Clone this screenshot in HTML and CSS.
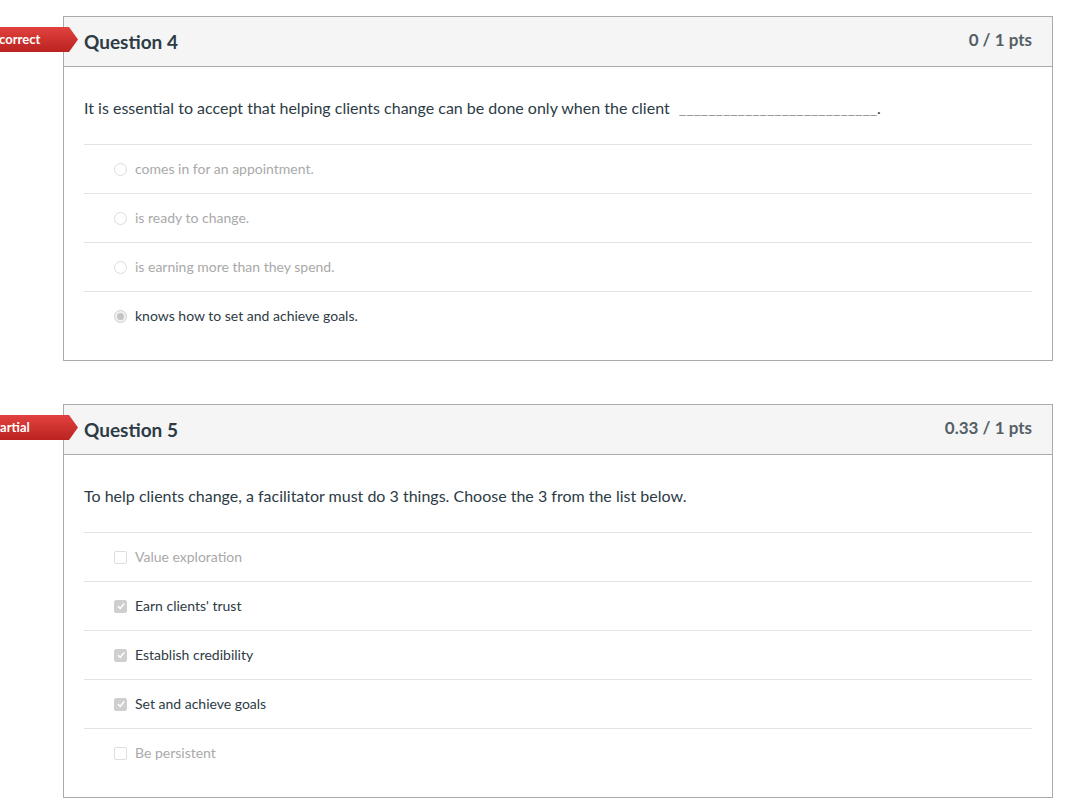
FILE: index.html
```html
<!doctype html>
<html lang="en">
<head>
    <meta charset="UTF-8">
    <title>Quiz results</title>
    <link rel="stylesheet" href="styles.css">
</head>
<body>

<div class="quiz">
    <div class="question">
        <div class="badge">Incorrect</div>
        <div class="header">
            <div class="title">Question 4</div>
            <div class="points">0 / 1 pts</div>
        </div>
        <div class="content">
            <div class="text">It is essential to accept that helping clients change can be done only when the client <span class="blank">___________________________</span>.</div>
            <div class="answers">
                <div class="answer"><span class="radio"></span>comes in for an appointment.</div>
                <div class="answer"><span class="radio"></span>is ready to change.</div>
                <div class="answer"><span class="radio"></span>is earning more than they spend.</div>
                <div class="answer selected"><span class="radio checked"></span>knows how to set and achieve goals.</div>
            </div>
        </div>
    </div>

    <div class="question">
        <div class="badge">Partial</div>
        <div class="header">
            <div class="title">Question 5</div>
            <div class="points">0.33 / 1 pts</div>
        </div>
        <div class="content">
            <div class="text">To help clients change, a facilitator must do 3 things. Choose the 3 from the list below.</div>
            <div class="answers">
                <div class="answer"><span class="check"></span>Value exploration</div>
                <div class="answer selected"><span class="check checked"><svg width="10" height="10" viewBox="0 0 10 10"><path d="M2 5.2 L4.2 7.4 L8.2 2.6" fill="none" stroke="#fff" stroke-width="1.6"/></svg></span>Earn clients' trust</div>
                <div class="answer selected"><span class="check checked"><svg width="10" height="10" viewBox="0 0 10 10"><path d="M2 5.2 L4.2 7.4 L8.2 2.6" fill="none" stroke="#fff" stroke-width="1.6"/></svg></span>Establish credibility</div>
                <div class="answer selected"><span class="check checked"><svg width="10" height="10" viewBox="0 0 10 10"><path d="M2 5.2 L4.2 7.4 L8.2 2.6" fill="none" stroke="#fff" stroke-width="1.6"/></svg></span>Set and achieve goals</div>
                <div class="answer"><span class="check"></span>Be persistent</div>
            </div>
        </div>
    </div>
</div>

</body>
</html>
```

FILE: styles.css
```css
body {
    margin: 0;
    padding: 0;
    background: #fff;
    font-family: Lato, "Open Sans", sans-serif;
    color: #2d3b45;
    overflow: hidden;
}

.quiz {
    padding: 16px 0 0 63px;
}

.question {
    position: relative;
    width: 988px;
    border: 1px solid #aaaaaa;
    margin-bottom: 43px;
}

/* ribbon sticks out to the left of the box */
.badge {
    position: absolute;
    left: -76px;
    top: 10px;
    width: 90px;
    height: 25px;
    line-height: 24px;
    padding-right: 44px;
    box-sizing: border-box;
    text-align: center;
    white-space: nowrap;
    color: #fff;
    font-size: 13px;
    font-weight: bold;
    background: linear-gradient(#e2423f, #b92320);
    clip-path: polygon(0 0, calc(100% - 9px) 0, 100% 50%, calc(100% - 9px) 100%, 0 100%);
}

.header {
    display: flex;
    justify-content: space-between;
    align-items: center;
    height: 49px;
    padding: 0 20px;
    background: #f5f5f5;
    border-bottom: 1px solid #aaaaaa;
}

.title {
    font-size: 19px;
    font-weight: bold;
    color: #2d3b45;
}

.points {
    font-size: 17px;
    font-weight: bold;
    color: #555f66;
    margin-top: -5px;
}

.content {
    padding: 29px 20px 20px;
}

.text {
    font-size: 16px;
    line-height: 24px;
    margin-bottom: 24px;
}

.blank {
    color: #999;
    margin-left: 5px;
    font-size: 16px;
}

.answer {
    display: flex;
    align-items: center;
    height: 48px;
    line-height: 46px;
    border-top: 1px solid #e3e3e3;
    padding-left: 30px;
    font-size: 14px;
    color: #a9a9a9;
}

.answer.selected {
    color: #2d3b45;
}

.radio {
    width: 11px;
    height: 11px;
    border: 1px solid #dcdcdc;
    border-radius: 50%;
    margin-right: 8px;
    box-sizing: content-box;
    display: flex;
    align-items: center;
    justify-content: center;
}

.radio.checked {
    border-color: #d0d0d0;
    background: #f0f0f0;
}

.radio.checked::after {
    content: '';
    width: 7px;
    height: 7px;
    border-radius: 50%;
    background: #c4c4c4;
}

.check {
    width: 11px;
    height: 11px;
    border: 1px solid #dedede;
    border-radius: 2px;
    margin-right: 8px;
    display: flex;
    align-items: center;
    justify-content: center;
}

.check.checked {
    background: #cfcfcf;
    border-color: #cfcfcf;
}
```
